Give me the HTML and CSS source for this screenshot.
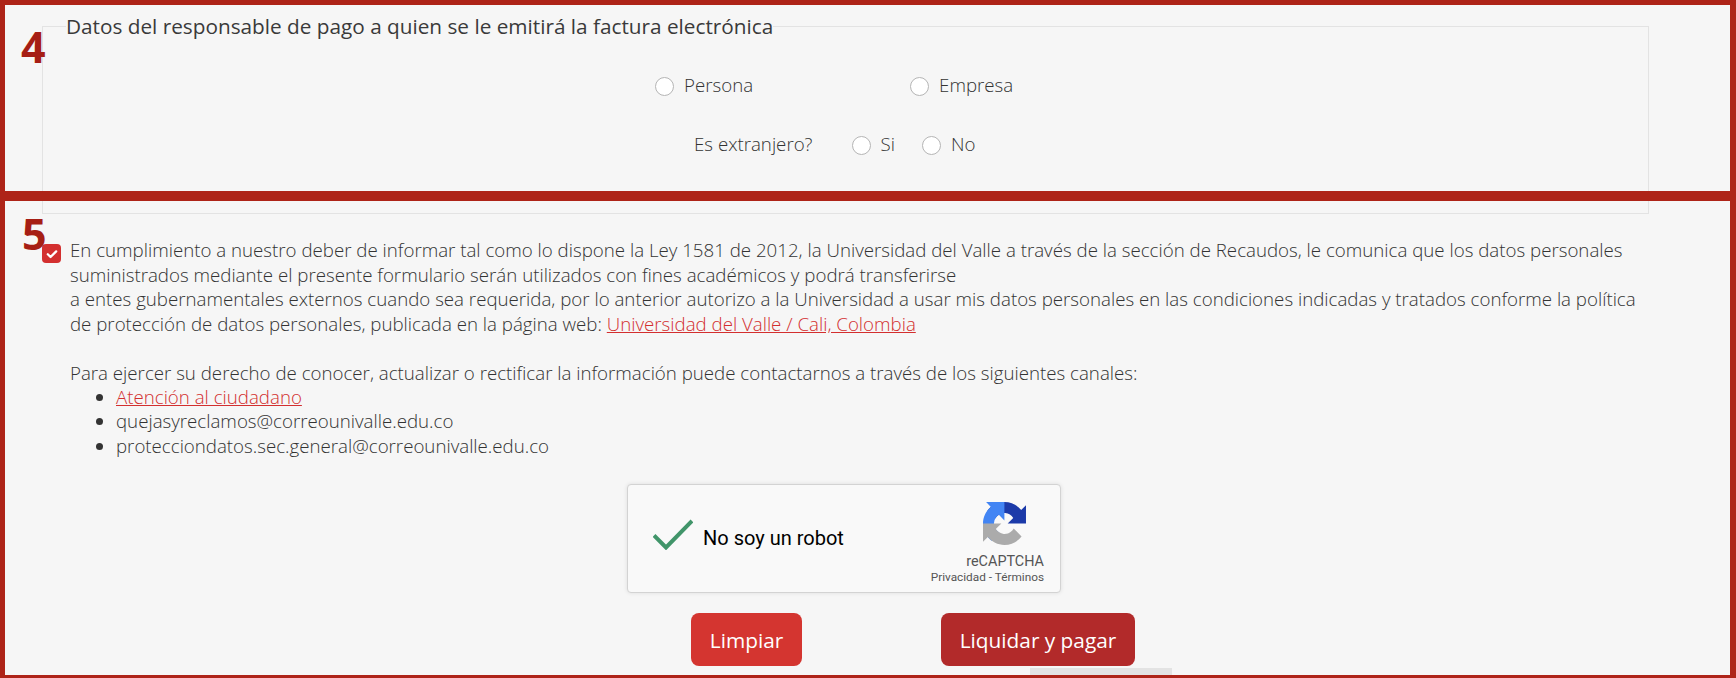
FILE: index.html
```html
<!DOCTYPE html>
<html lang="es">
<head>
<meta charset="utf-8">
<title>Datos del responsable de pago</title>
<link rel="stylesheet" href="styles.css">
</head>
<body>
<main class="page">
  <fieldset class="payer">
    <legend class="payer-legend">Datos del responsable de pago a quien se le emitirá la factura electrónica</legend>
    <div class="type-row">
      <label class="option"><span class="radio"></span>Persona</label>
      <label class="option"><span class="radio"></span>Empresa</label>
    </div>
    <div class="foreign-row">
      <span class="foreign-label">Es extranjero?</span>
      <label class="option"><span class="radio"></span>Si</label>
      <label class="option"><span class="radio"></span>No</label>
    </div>
  </fieldset>

  <section class="consent">
    <span class="check">
      <svg viewBox="0 0 20 20" width="12" height="12"><path d="M3 10.5l4.6 4.5L17 5.6" fill="none" stroke="#fff" stroke-width="3.8" stroke-linecap="round" stroke-linejoin="round"/></svg>
    </span>
    <div class="legal">
      <p>En cumplimiento a nuestro deber de informar tal como lo dispone la Ley 1581 de 2012, la Universidad del Valle a través de la sección de Recaudos, le comunica que los datos personales suministrados mediante el presente formulario serán utilizados con fines académicos y podrá transferirse<br>a entes gubernamentales externos cuando sea requerida, por lo anterior autorizo a la Universidad a usar mis datos personales en las condiciones indicadas y tratados conforme la política de protección de datos personales, publicada en la página web: <a href="#">Universidad del Valle / Cali, Colombia</a></p>
      <p class="channels">Para ejercer su derecho de conocer, actualizar o rectificar la información puede contactarnos a través de los siguientes canales:</p>
      <ul class="channel-list">
        <li><a href="#">Atención al ciudadano</a></li>
        <li>quejasyreclamos@correounivalle.edu.co</li>
        <li>protecciondatos.sec.general@correounivalle.edu.co</li>
      </ul>
    </div>
  </section>

  <div class="captcha">
    <svg class="captcha-tick" viewBox="0 0 40 31" width="40" height="31"><path d="M1 16.5L13 28.5 39 2" fill="none" stroke="#41956a" stroke-width="4"/></svg>
    <span class="captcha-label">No soy un robot</span>
    <div class="captcha-brand">
      <svg viewBox="0 0 64 64" width="43" height="43">
        <path d="M64 31.955l-.033-1.37V4.687l-7.16 7.16C50.948 4.674 42.033.093 32.05.093c-10.4 0-19.622 4.96-25.458 12.64l11.736 11.86a15.55 15.55 0 0 1 4.754-5.334c2.05-1.6 4.952-2.906 8.968-2.906.485 0 .86.057 1.135.163 4.976.393 9.288 3.14 11.828 7.124l-8.307 8.307L64 31.953" fill="#1c3aa9"/>
        <path d="M31.862.094l-1.37.033H4.594l7.16 7.16C4.58 13.147 0 22.06 0 32.046c0 10.4 4.96 19.622 12.64 25.458l11.86-11.736a15.55 15.55 0 0 1-5.334-4.754c-1.6-2.05-2.906-4.952-2.906-8.968 0-.485.057-.86.163-1.135.393-4.976 3.14-9.288 7.124-11.828l8.307 8.307L31.86.095" fill="#4285f4"/>
        <path d="M.001 32.045l.033 1.37v25.898l7.16-7.16c5.86 7.173 14.774 11.754 24.76 11.754 10.4 0 19.622-4.96 25.458-12.64l-11.736-11.86a15.55 15.55 0 0 1-4.754 5.334c-2.05 1.6-4.952 2.906-8.968 2.906-.485 0-.86-.057-1.135-.163-4.976-.393-9.288-3.14-11.828-7.124l8.307-8.307L0 32.047" fill="#ababab"/>
      </svg>
      <span class="captcha-name">reCAPTCHA</span>
      <span class="captcha-links">Privacidad - Términos</span>
    </div>
  </div>

  <div class="actions">
    <button class="btn btn-clear" type="button">Limpiar</button>
    <button class="btn btn-pay" type="button">Liquidar y pagar</button>
  </div>
</main>

<div class="frame frame-top"></div>
<div class="frame frame-bottom"></div>
<span class="step step-four">4</span>
<span class="step step-five">5</span>
<div class="footer-tab"></div>
</body>
</html>
```

FILE: styles.css
```css
* { box-sizing: border-box; }
html, body { margin: 0; height: 678px; overflow: hidden; }
body {
  position: relative;
  background: #f6f6f6;
  color: #333;
  font-family: "Open Sans", "Liberation Sans", sans-serif;
  font-weight: 300;
  font-size: 18.7px;
  line-height: 24.6px;
}
.page { padding: 13px 87px 0 42px; }

.payer {
  margin: 0;
  padding: 0;
  height: 201px;
  border: 1px solid #e3e3e3;
}
.payer-legend {
  margin-left: 23px;
  padding: 0;
  font-size: 20.75px;
  font-weight: 400;
  line-height: 26px;
  color: #3a3a3a;
}
.type-row { display: flex; padding: 34px 0 0 612px; gap: 157px; }
.foreign-row { display: flex; align-items: center; padding: 34px 0 0 651px; }
.foreign-label { margin-right: 39px; }
.foreign-row .option + .option { margin-left: 27px; }
.option { display: flex; align-items: center; gap: 10px; }
.radio {
  width: 19px;
  height: 19px;
  margin-top: 3px;
  border: 1px solid #b5b5b5;
  border-radius: 50%;
  background: #fff;
}

.consent { display: flex; padding-top: 24px; }
.check {
  flex: none;
  display: flex;
  align-items: center;
  justify-content: center;
  width: 19px;
  height: 19px;
  margin-top: 6px;
  border-radius: 4px;
  background: #d32f2f;
}
.legal { margin-left: 9px; flex: 1; }
.legal p { margin: 0; }
.legal a { color: #d32f2f; text-decoration: underline; }
.channels { padding-top: 24.6px; }
.channel-list { margin: -1px 0 0; padding: 0 0 0 46px; }

.captcha {
  display: flex;
  align-items: center;
  width: 434px;
  height: 109px;
  margin: 26px 0 0 585px;
  position: relative;
  padding-left: 25px;
  background: #f9f9f9;
  border: 1px solid #d3d3d3;
  border-radius: 4px;
  box-shadow: 0 0 4px rgba(0, 0, 0, .1);
  color: #000;
  font-family: Roboto, "Liberation Sans", sans-serif;
  font-weight: 400;
}
.captcha-tick { flex: none; margin-top: -8px; }
.captcha-label { margin-left: 10px; margin-top: -2px; font-size: 20px; }
.captcha-brand {
  align-self: flex-start;
  margin-left: auto;
  margin-right: 16px;
  padding-top: 17px;
  display: flex;
  flex-direction: column;
  align-items: flex-end;
  color: #555;
}
.captcha-brand svg { margin: 0 18px 0 0; }
.captcha-name { font-size: 14.4px; line-height: 16px; margin-top: 9px; }
.captcha-links { font-size: 11.8px; line-height: 15px; margin-top: 0; }

.actions { display: flex; gap: 139px; margin: 20px 0 0 649px; }
.btn {
  height: 53px;
  border: 0;
  border-radius: 8px;
  color: #fff;
  font-family: inherit;
  font-size: 20.8px;
  font-weight: 400;
}
.btn-clear { width: 111px; background: #d43530; }
.btn-pay { width: 194px; background: #b22a2a; }

.frame {
  position: absolute;
  left: 0;
  width: 1736px;
  border: solid #ae2418;
  border-width: 5px 6px 5px 5px;
}
.frame-top { top: 0; height: 196px; }
.frame-bottom { top: 196px; height: 482px; border-bottom-width: 3px; }
.step {
  position: absolute;
  left: 21px;
  color: #a61e14;
  font-size: 43px;
  font-weight: 700;
  line-height: 43px;
}
.step-four { top: 25px; }
.step-five { top: 212px; left: 22px; }
.footer-tab {
  position: absolute;
  left: 1030px;
  top: 668px;
  width: 142px;
  height: 7px;
  background: #e3e3e3;
}
```
